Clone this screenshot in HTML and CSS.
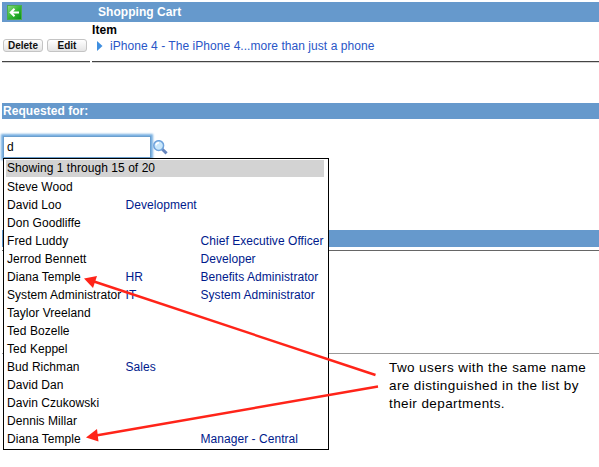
FILE: index.html
```html
<!DOCTYPE html>
<html lang="en">
<head>
<meta charset="utf-8">
<title>Shopping Cart</title>
<link rel="stylesheet" href="styles.css">
</head>
<body>
<main class="page">
  <header class="bar cart-bar">
    <svg class="back" width="15" height="15" viewBox="0 0 15 15">
      <defs><linearGradient id="green" x2="1" y2="1"><stop stop-color="#8ddc83"/><stop offset=".5" stop-color="#35b835"/><stop offset="1" stop-color="#078f13"/></linearGradient></defs>
      <rect x=".5" y=".5" width="14" height="14" fill="url(#green)" stroke="#4aab50"/>
      <path d="M12 7.5H4M7.5 3.8 3.7 7.5l3.8 3.7" fill="none" stroke="#fff" stroke-width="2"/>
    </svg>
    <h1 class="bar-title"><span>Shopping Cart</span></h1>
  </header>
  <section class="cart">
    <div class="actions"><button class="btn">Delete</button><button class="btn">Edit</button></div>
    <div class="item">
      <div class="item-head"><span>Item</span></div>
      <a class="item-link"><svg width="6" height="10" viewBox="0 0 6 10"><path d="M0 0 5.5 5 0 10z" fill="#3f8fe0"/></svg><span>iPhone 4 - The iPhone 4...more than just a phone</span></a>
    </div>
  </section>
  <h2 class="bar request-bar"><span>Requested for:</span></h2>
  <section class="lookup">
    <div class="field">d</div>
    <svg class="lens" width="15" height="15" viewBox="0 0 15 15">
      <path d="M9 9l4.600 4.400" stroke="#6685bd" stroke-width="3"/>
      <circle cx="5.700" cy="5.600" r="4.900" fill="#c9e7fb" stroke="#6fa3dc" stroke-width="1.500"/>
      <path d="M3 5.300a3 3 0 0 1 3-2.500" fill="none" stroke="#fff" stroke-width="1.500"/>
    </svg>
    <div class="menu">
      <div class="menu-head"><span>Showing 1 through 15 of 20</span></div>
      <div class="row"><span>Steve Wood</span></div>
      <div class="row"><span>David Loo</span><span class="dept">Development</span></div>
      <div class="row"><span>Don Goodliffe</span></div>
      <div class="row"><span>Fred Luddy</span><span class="job">Chief Executive Officer</span></div>
      <div class="row"><span>Jerrod Bennett</span><span class="job">Developer</span></div>
      <div class="row"><span>Diana Temple</span><span class="dept">HR</span><span class="job">Benefits Administrator</span></div>
      <div class="row"><span>System Administrator</span><span class="dept">IT</span><span class="job">System Administrator</span></div>
      <div class="row"><span>Taylor Vreeland</span></div>
      <div class="row"><span>Ted Bozelle</span></div>
      <div class="row"><span>Ted Keppel</span></div>
      <div class="row"><span>Bud Richman</span><span class="dept">Sales</span></div>
      <div class="row"><span>David Dan</span></div>
      <div class="row"><span>Davin Czukowski</span></div>
      <div class="row"><span>Dennis Millar</span></div>
      <div class="row"><span>Diana Temple</span><span class="job">Manager - Central</span></div>
    </div>
  </section>
  <div class="bar lower-bar"></div>
  <div class="panel"></div>
  <p class="note">Two users with the same name<br>are distinguished in the list by<br>their departments.</p>
</main>
<svg class="arrows" width="599" height="467" viewBox="0 0 599 467">
  <g stroke="#ff2419" stroke-width="2.400"><path d="M375.500 375 94 281.500"/><path d="M378 386.500 96 435.500"/></g>
  <g fill="#ff2419"><path d="M84 278.500 97 276 93 288z"/><path d="M86 437.500 97 429 98.500 441.500z"/></g>
</svg>
</body>
</html>
```

FILE: styles.css
```css
* { box-sizing: border-box; }
body {
  margin: 0;
  width: 599px;
  height: 467px;
  overflow: hidden;
  position: relative;
  background: #fff;
  color: #000;
  font: 12px/18px "Liberation Sans", Arial, sans-serif;
  letter-spacing: 0.05px;
}
.page { padding: 2px 0 0 2px; }
.bar { margin: 0; background: #6699cc; color: #fff; font-size: 12px; font-weight: bold; }
.cart-bar { display: flex; align-items: center; height: 20px; }
.back { margin-left: 5px; }
.bar-title { margin: 0 0 0 76px; font-size: 12px; line-height: 20px; }
.cart { display: grid; grid-template-columns: 88px 1fr; column-gap: 2px; height: 41px; }
.actions, .item { border-bottom: 1px solid #444; box-shadow: 0 1px #d5d5d5; height: 40px; }
.actions { display: flex; gap: 4px; padding: 17px 0 0 1px; }
.btn {
  width: 40px;
  height: 13px;
  padding: 0;
  border: 1px solid #c4c4c4;
  border-radius: 3px;
  background: linear-gradient(#fff, #e4e4e4);
  color: #111;
  font: bold 10px/10px "Liberation Sans", Arial, sans-serif;
}
.item-head { font-weight: bold; line-height: 16px; }
.item-link { display: flex; align-items: center; gap: 7px; padding-left: 5px; line-height: 16px; color: #2956c7; }
.request-bar { height: 16px; margin-top: 40px; padding-left: 1px; line-height: 16px; }
.lookup { position: relative; display: flex; height: 111px; padding: 17px 0 0 1px; }
.field {
  width: 148px;
  height: 22px;
  padding-left: 3px;
  border: 1px solid #6b9fce;
  box-shadow: 0 0 2px 2px #75aee0;
  line-height: 20px;
}
.lens { margin: 4px 0 0 2px; }
.menu {
  position: absolute;
  z-index: 2;
  top: 39px;
  left: 1px;
  width: 326px;
  height: 292px;
  padding: 1px 4px 1px 2px;
  border: 1px solid #000;
  background: #fff;
  white-space: nowrap;
}
.menu-head { height: 17px; margin-bottom: 1px; padding-left: 1px; line-height: 17px; background: #d3d3d3; }
.row { display: grid; grid-template-columns: 118.5px 75px 1fr; height: 18px; padding-left: 1px; }
.dept { grid-column: 2; color: #001a8c; }
.job { grid-column: 3; color: #001a8c; }
.lower-bar { height: 17px; }
.panel { height: 104px; margin-top: 3px; border-top: 1px solid #666; border-bottom: 1px solid #999; }
.note { width: 210px; margin: 5px 0 0 387px; font-size: 13.5px; line-height: 18px; letter-spacing: 0.4px; white-space: nowrap; }
.arrows { position: absolute; z-index: 3; top: 0; left: 0; }
```
